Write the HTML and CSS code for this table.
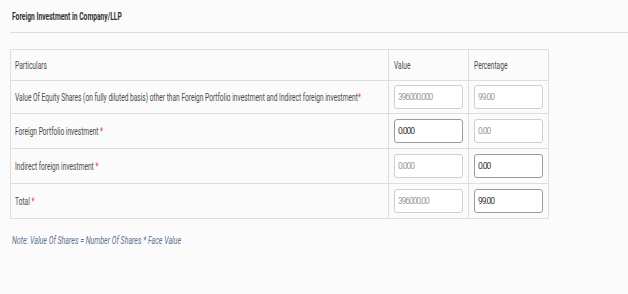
FILE: index.html
```html
<!DOCTYPE html>
<html lang="en">

<head>
    <meta charset="UTF-8">
    <title>Foreign Investment in Company/LLP</title>
    <link rel="stylesheet" href="styles.css">
</head>

<body>
    <div class="title-bar">
        <span class="sq">Foreign Investment in Company/LLP</span>
    </div>

    <table class="invest">
        <colgroup>
            <col class="c-label">
            <col class="c-num">
            <col class="c-num">
        </colgroup>
        <tr class="head">
            <td class="label"><span class="sq">Particulars</span></td>
            <td class="num"><span class="sq">Value</span></td>
            <td class="num"><span class="sq">Percentage</span></td>
        </tr>
        <tr class="r1">
            <td class="label"><span class="sq">Value Of Equity Shares (on fully diluted basis) other than Foreign Portfolio investment and Indirect foreign investment<b class="req">*</b></span></td>
            <td class="num"><input type="text" class="light" value="396000.000"></td>
            <td class="num"><input type="text" class="light" value="99.00"></td>
        </tr>
        <tr>
            <td class="label"><span class="sq">Foreign Portfolio investment <b class="req">*</b></span></td>
            <td class="num"><input type="text" class="dark" value="0.000"></td>
            <td class="num"><input type="text" class="light" value="0.00"></td>
        </tr>
        <tr>
            <td class="label"><span class="sq">Indirect foreign investment <b class="req">*</b></span></td>
            <td class="num"><input type="text" class="light" value="0.000"></td>
            <td class="num"><input type="text" class="dark" value="0.00"></td>
        </tr>
        <tr>
            <td class="label"><span class="sq">Total <b class="req">*</b></span></td>
            <td class="num"><input type="text" class="light" value="396000.00"></td>
            <td class="num"><input type="text" class="dark" value="99.00"></td>
        </tr>
    </table>

    <p class="note"><span class="sq">Note: Value Of Shares = Number Of Shares * Face Value</span></p>
</body>

</html>
```

FILE: styles.css
```css
body {
    margin: 0;
    background-color: #fbfbfb;
    font-family: Roboto, "Liberation Sans", sans-serif;
    color: #4a4a4a;
}

/* narrow lettering used all over the form */
.sq {
    display: inline-block;
    white-space: nowrap;
    transform: scaleX(0.63);
    transform-origin: 0 50%;
}

.title-bar {
    margin-left: 10px;
    padding: 10px 0 8px 2px;
    border-bottom: 1px solid #dcdcdc;
    font-size: 11px;
    line-height: 14px;
    font-weight: bold;
    color: #333;
}

.title-bar .sq {
    transform: scaleX(0.61);
}

.invest {
    margin: 16px 0 0 10px;
    width: 539px;
    table-layout: fixed;
    border-collapse: collapse;
    font-size: 10.5px;
}

.c-label {
    width: 378px;
}

.c-num {
    width: 80px;
}

.invest td {
    border: 1px solid #dedede;
    padding: 0 5px;
    height: 34px;
    overflow: hidden;
    vertical-align: middle;
}

.invest .head td {
    height: 30px;
}

.invest .r1 td {
    height: 32px;
}

.invest td.label {
    padding-left: 4px;
}

.req {
    color: #e0393e;
    font-weight: normal;
}

input {
    box-sizing: border-box;
    width: 69px;
    height: 24px;
    margin: 0;
    padding: 0 3px;
    border-radius: 3px;
    background: #fff;
    font-family: Roboto, sans-serif;
    font-size: 8.5px;
    letter-spacing: -1.1px;
    outline: none;
}

input.light {
    border: 1px solid #cfcfcf;
    color: #999;
}

input.dark {
    border: 1px solid #9a9a9a;
    color: #333;
}

.note {
    margin: 15px 0 0 12px;
    font-size: 11px;
    line-height: 14px;
    font-style: italic;
    color: #5b7290;
}

.note .sq {
    transform: scaleX(0.64);
}
```
